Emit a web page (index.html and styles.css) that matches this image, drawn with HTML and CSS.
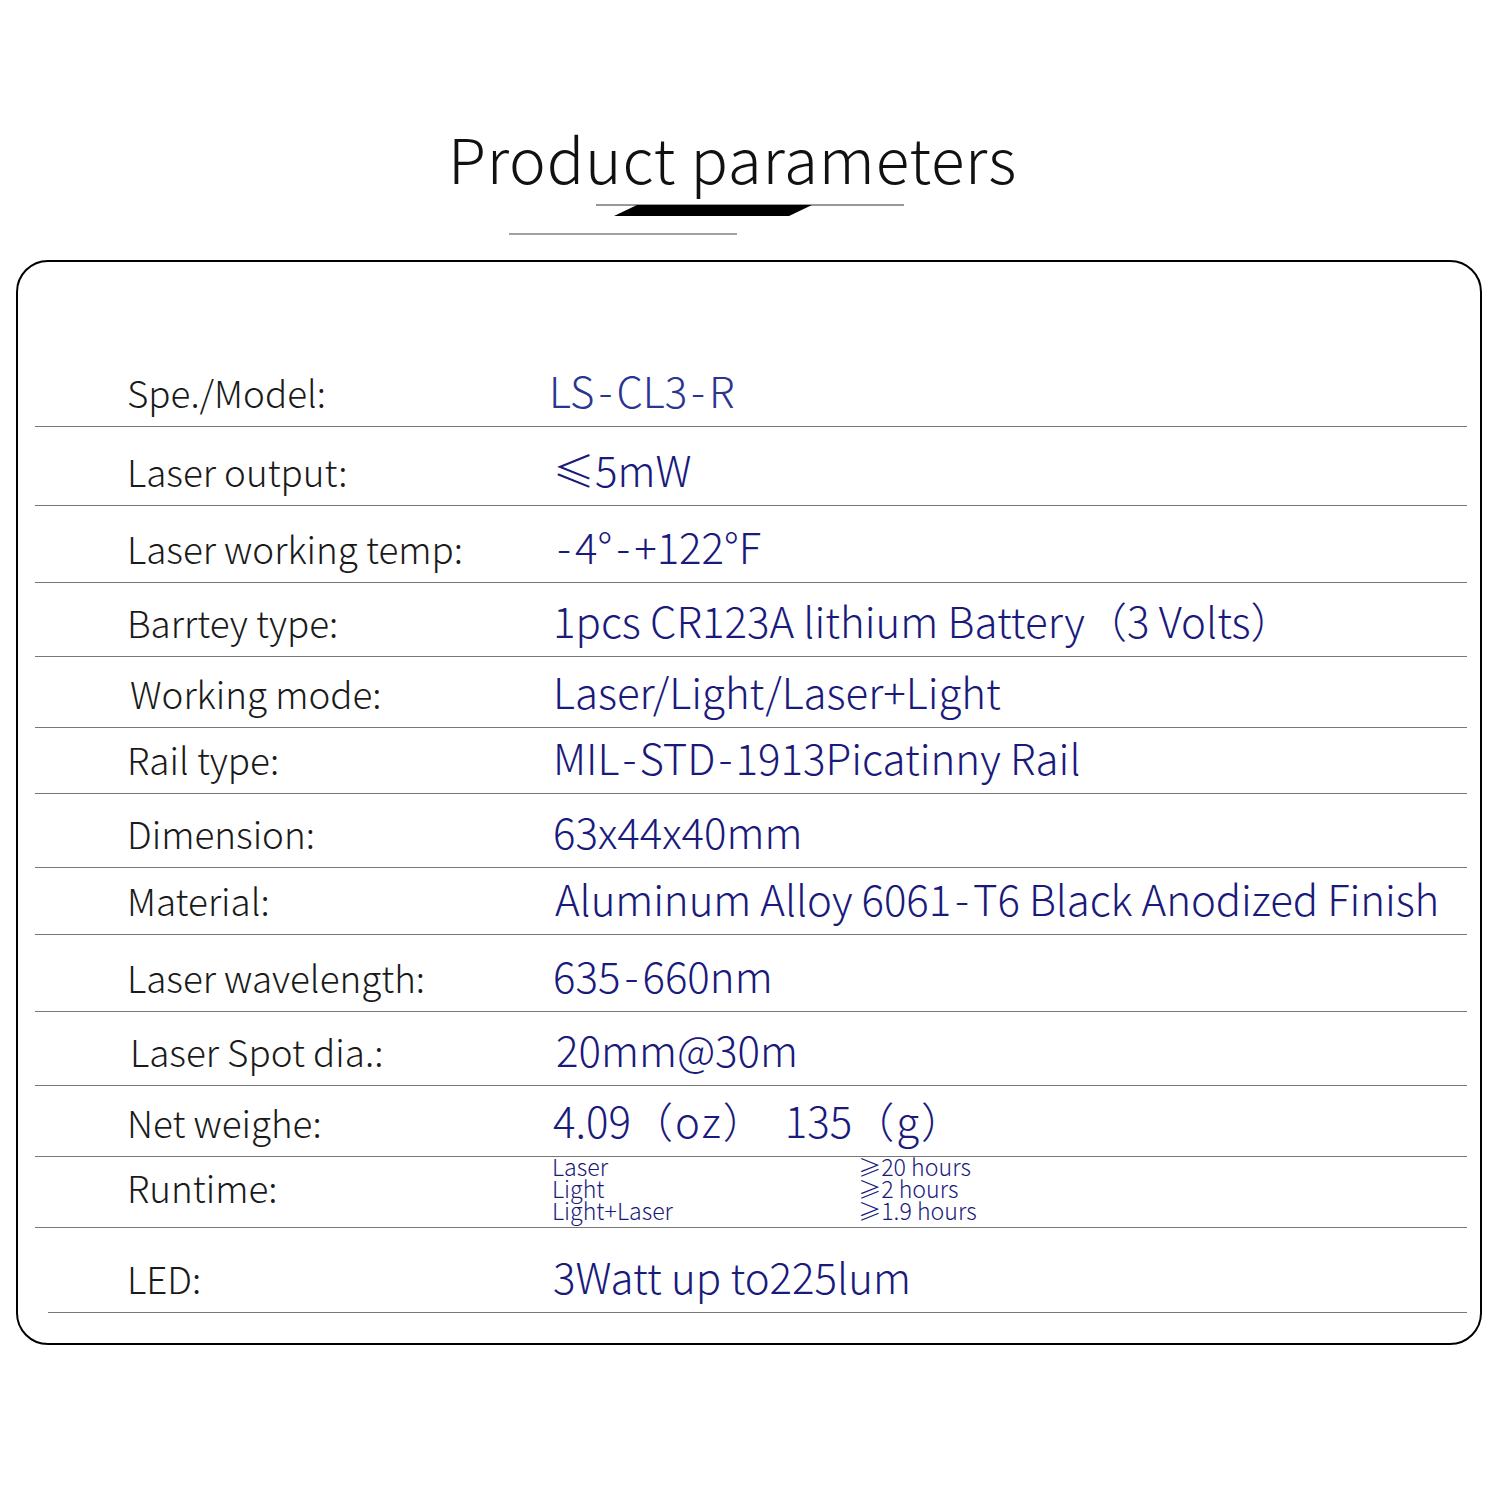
FILE: index.html
```html
<!DOCTYPE html>
<html lang="en">
<head>
<meta charset="utf-8">
<title>Product parameters</title>
<link rel="stylesheet" href="styles.css">
</head>
<body>
<header class="head">
  <h1 class="title">Product parameters</h1>
  <svg class="deco" width="1500" height="40" viewBox="0 0 1500 40" aria-hidden="true">
    <line x1="596" y1="1" x2="904" y2="1" stroke="#333" stroke-width="1"/>
    <polygon points="637,1 812,1 789,12 614,12" fill="#000"/>
    <line x1="509" y1="30" x2="737" y2="30" stroke="#444" stroke-width="1"/>
  </svg>
</header>
<section class="card">
  <div class="row r1"><span class="label">Spe./Model:</span><span class="value v-model">LS<span class="dash">-</span>CL3<span class="dash">-</span>R</span></div>
  <div class="row r2"><span class="label">Laser output:</span><span class="value">≤5mW</span></div>
  <div class="row r3"><span class="label">Laser working temp:</span><span class="value"><span class="dash">-</span>4°<span class="dash">-</span>+122°F</span></div>
  <div class="row r4"><span class="label">Barrtey type:</span><span class="value">1pcs CR123A lithium Battery（3 Volts）</span></div>
  <div class="row r5"><span class="label shift">Working mode:</span><span class="value">Laser/Light/Laser+Light</span></div>
  <div class="row r6"><span class="label">Rail type:</span><span class="value">MIL<span class="dash sm">-</span>STD<span class="dash sm">-</span>1913Picatinny Rail</span></div>
  <div class="row r7"><span class="label">Dimension:</span><span class="value">63x44x40mm</span></div>
  <div class="row r8"><span class="label">Material:</span><span class="value wide">Aluminum Alloy 6061<span class="dash">-</span>T6 Black Anodized Finish</span></div>
  <div class="row r9"><span class="label">Laser wavelength:</span><span class="value">635<span class="dash">-</span>660nm</span></div>
  <div class="row r10"><span class="label shift">Laser Spot dia.:</span><span class="value v-spot">20mm@30m</span></div>
  <div class="row r11"><span class="label">Net weighe:</span><span class="value">4.09<span class="paren">（oz）</span><span class="gap"></span>135<span class="paren">（g）</span></span></div>
  <div class="row r12 runtime"><span class="label">Runtime:</span>
    <div class="rt">
      <span>Laser</span><span>≥20 hours</span>
      <span>Light</span><span>≥2 hours</span>
      <span>Light+Laser</span><span>≥1.9 hours</span>
    </div>
  </div>
  <div class="row r13 last"><span class="label">LED:</span><span class="value">3Watt up to225lum</span></div>
</section>
</body>
</html>
```
FILE: styles.css
```css
* { box-sizing: border-box; }
html, body { margin: 0; padding: 0; background: #fff; }
body {
  width: 1500px;
  height: 1500px;
  font-family: "Noto Sans CJK SC", "Noto Sans", sans-serif;
  font-weight: 300;
  color: #111;
}
.head {
  padding-top: 122px;
  display: flex;
  flex-direction: column;
  align-items: flex-start;
}
.title {
  margin: 0 0 0 448px;
  font-size: 62px;
  line-height: 70px;
  font-weight: 200;
  letter-spacing: 0.8px;
  color: #111;
  white-space: nowrap;
}
.deco { display: block; margin-top: 12px; }
.card {
  margin: 16px 0 0 16px;
  width: 1466px;
  height: 1085px;
  border: 2px solid #000;
  border-radius: 32px;
  padding: 86px 13px 0 17px;
}
.row {
  display: flex;
  align-items: flex-end;
  border-bottom: 1px solid #777;
  padding: 0 0 16px 92px;
  white-space: nowrap;
}
.label {
  width: 426px;
  flex: none;
  font-size: 36.8px;
  line-height: 36px;
  color: #1a1a1a;
}
.label.shift { padding-left: 3px; }
.value {
  font-size: 42px;
  line-height: 40px;
  color: #1a1a7c;
}
.dash { padding: 0 4px; }
.dash.sm { padding: 0 3px; }
.v-model { color: #2a3590; margin-left: -4px; }
.v-spot { margin-left: 3px; }
.wide { letter-spacing: -0.1px; margin-left: 2px; }
.paren { letter-spacing: 2px; }
.gap { display: inline-block; width: 18px; }
.r1 { height: 79px; }
.r2 { height: 79px; }
.r3 { height: 77px; }
.r4 { height: 74px; }
.r5 { height: 71px; }
.r6 { height: 66px; }
.r7 { height: 74px; }
.r8 { height: 67px; }
.r9 { height: 77px; }
.r10 { height: 74px; }
.r11 { height: 71px; }
.r12 { height: 71px; }
.r13 { height: 85px; }
.runtime { align-items: center; padding-bottom: 0; }
.runtime .label { margin-top: -10px; }
.rt {
  display: grid;
  grid-template-columns: 306px auto;
  font-size: 23.2px;
  line-height: 22px;
  color: #1a1a7c;
  margin-top: -8px;
  margin-left: -1px;
}
.last { margin-left: 13px; padding-left: 79px; }
```
